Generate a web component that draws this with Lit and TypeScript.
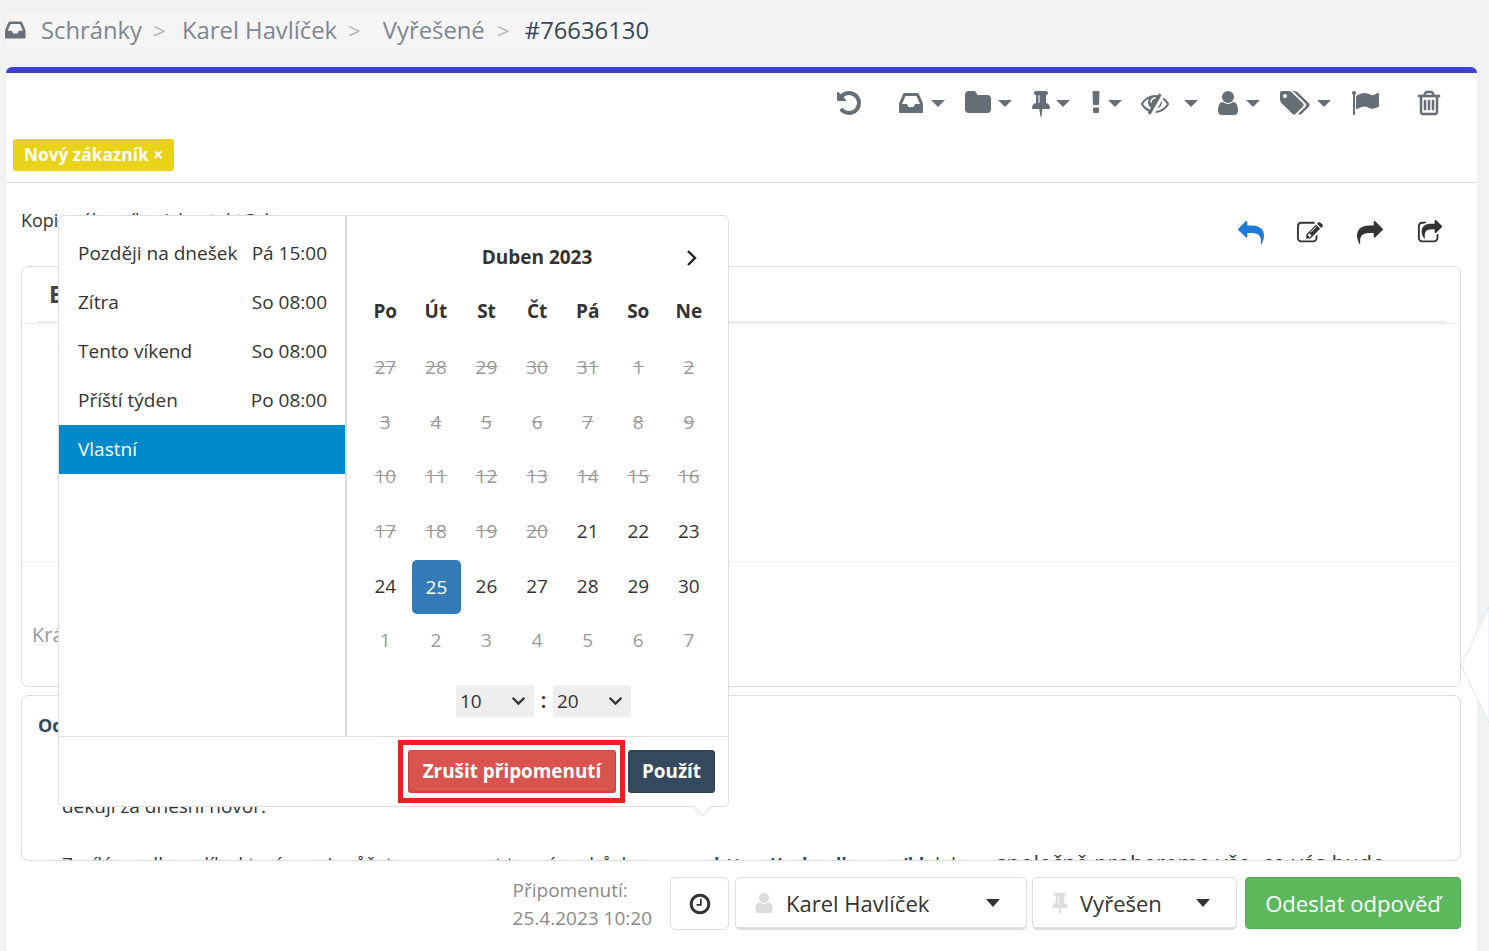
import { LitElement, html, css, svg } from "lit";
import { customElement } from "lit/decorators.js";

const P: Record<string, string> = {
  undo: "M1664 896q0 156-61 298t-164 245-245 164-298 61q-172 0-327-72.500t-264-204.500q-7-10-6.500-22.500t8.500-20.500l137-138q10-9 25-9 16 2 23 12 73 95 179 147t225 52q104 0 198.500-40.500t163.500-109.500 109.500-163.500 40.500-198.500-40.500-198.500-109.500-163.500-163.500-109.500-198.500-40.500q-98 0-188 35.500t-160 101.500l137 138q31 30 14 69-17 40-59 40h-448q-26 0-45-19t-19-45v-448q0-42 40-59 39-17 69 14l130 129q107-101 244.500-156.500t284.500-55.500q156 0 298 61t245 164 164 245 61 298z",
  clock: "M1024 544v448q0 14-9 23t-23 9h-320q-14 0-23-9t-9-23v-64q0-14 9-23t23-9h224v-352q0-14 9-23t23-9h64q14 0 23 9t9 23zm416 352q0-148-73-273t-198-198-273-73-273 73-198 198-73 273 73 273 198 198 273 73 273-73 198-198 73-273zm224 0q0 209-103 385.500t-279.500 279.500-385.500 103-385.500-103-279.500-279.500-103-385.500 103-385.500 279.500-279.500 385.500-103 385.500 103 279.500 279.500 103 385.500z",
  folder: "M1728 608v704q0 92-66 158t-158 66h-1216q-92 0-158-66t-66-158v-960q0-92 66-158t158-66h320q92 0 158 66t66 158v32h672q92 0 158 66t66 158z",
  user: "M1536 1399q0 109-62.500 187t-150.500 78h-854q-88 0-150.500-78t-62.500-187q0-85 8.500-160.500t31.500-152 58.500-131 94-89 134.500-34.500q131 128 313 128t313-128q76 0 134.500 34.500t94 89 58.500 131 31.500 152 8.500 160.500zm-256-887q0 159-112.500 271.500t-271.500 112.500-271.500-112.500-112.500-271.500 112.500-271.500 271.500-112.500 271.500 112.500 112.500 271.500z",
  pin: "M800 864v-448q0-14-9-23t-23-9-23 9-9 23v448q0 14 9 23t23 9 23-9 9-23zm672 352q0 26-19 45t-45 19h-429l-51 483q-2 12-10.500 20.500t-20.500 8.500h-1q-27 0-32-27l-76-485h-404q-26 0-45-19t-19-45q0-123 78.500-221.500t177.500-98.500v-512q-52 0-90-38t-38-90 38-90 90-38h640q52 0 90 38t38 90-38 90-90 38v512q99 0 177.500 98.500t78.500 221.500z",
  excl: "M1088 1248v224q0 26-19 45t-45 19h-256q-26 0-45-19t-19-45v-224q0-26 19-45t45-19h256q26 0 45 19t19 45zm30-1056l-28 768q-1 26-20.500 45t-45.500 19h-256q-26 0-45.500-19t-20.500-45l-28-768q-1-26 17.500-45t44.500-19h320q26 0 44.500 19t17.500 45z",
  tags: "M384 448q0-53-37.500-90.500t-90.500-37.500-90.500 37.500-37.500 90.500 37.500 90.500 90.500 37.500 90.500-37.500 37.500-90.500zm1067 576q0 53-37 90l-491 492q-39 37-91 37-53 0-90-37l-715-716q-38-37-64.500-101t-26.500-117v-416q0-52 38-90t90-38h416q53 0 117 26.500t102 64.500l715 714q37 39 37 91zm384 0q0 53-37 90l-491 492q-39 37-91 37-36 0-59-14t-53-45l470-470q37-37 37-90 0-52-37-91l-715-714q-38-38-102-64.500t-117-26.500h224q53 0 117 26.500t102 64.500l715 714q37 39 37 91z",
  flag: "M320 256q0 72-64 110v1266q0 13-9.500 22.500t-22.500 9.500h-64q-13 0-22.500-9.500t-9.500-22.500v-1266q-64-38-64-110 0-53 37.500-90.500t90.500-37.500 90.500 37.500 37.500 90.500zm1472 64v763q0 25-12.500 38.500t-39.500 27.500q-215 116-369 116-61 0-123.500-22t-108.500-48-115.500-48-142.500-22q-192 0-464 146-17 9-33 9-26 0-45-19t-19-45v-742q0-32 31-55 21-14 79-43 236-120 421-120 107 0 200 29t219 88q38 19 88 19 54 0 117.500-21t110-47 88-47 54.500-21q26 0 45 19t19 45z",
  trash: "M704 736v576q0 14-9 23t-23 9h-64q-14 0-23-9t-9-23v-576q0-14 9-23t23-9h64q14 0 23 9t9 23zm256 0v576q0 14-9 23t-23 9h-64q-14 0-23-9t-9-23v-576q0-14 9-23t23-9h64q14 0 23 9t9 23zm256 0v576q0 14-9 23t-23 9h-64q-14 0-23-9t-9-23v-576q0-14 9-23t23-9h64q14 0 23 9t9 23zm128 724v-948h-896v948q0 22 7 40.500t14.500 27 10.500 8.500h832q3 0 10.500-8.500t14.500-27 7-40.500zm-672-1076h448l-48-117q-7-9-17-11h-317q-10 2-17 11zm928 32v64q0 14-9 23t-23 9h-96v948q0 83-47 143.500t-113 60.500h-832q-66 0-113-58.500t-47-141.500v-952h-96q-14 0-23-9t-9-23v-64q0-14 9-23t23-9h309l70-167q15-37 54-63t79-26h320q40 0 79 26t54 63l70 167h309q14 0 23 9t9 23z",
  inbox: "M1023 960h316q-1-3-2.500-8.500t-2.500-7.500l-212-496h-708l-212 496q-1 3-2.500 8.500t-2.500 7.500h316l95 192h320zm513 30v482q0 26-19 45t-45 19h-1408q-26 0-45-19t-19-45v-482q0-62 25-123l238-552q10-25 36.500-42t52.500-17h832q26 0 52.500 17t36.500 42l238 552q25 61 25 123z",
  reply: "M1792 1120q0 166-127 451-3 7-10.500 24t-13.500 30-13 22q-12 17-28 17-15 0-23.500-10t-8.500-25q0-9 2.500-26.500t2.500-23.500q5-68 5-123 0-101-17.500-181t-48.500-138.500-80-101-105.500-69.500-133-42.500-154-21.500-175.500-6h-224v256q0 26-19 45t-45 19-45-19l-512-512q-19-19-19-45t19-45l512-512q19-19 45-19t45 19 19 45v256h224q713 0 875 403 53 134 53 333z",
  forward: "M1792 640q0 26-19 45l-512 512q-19 19-45 19t-45-19-19-45v-256h-224q-98 0-175.500 6t-154 21.500-133 42.500-105.500 69.500-80 101-48.500 138.500-17.500 181q0 55 5 123 0 6 2.500 23.500t2.500 26.500q0 15-8.500 25t-23.500 10q-16 0-28-17-7-9-13-22t-13.500-30-10.500-24q-127-285-127-451 0-199 53-333 162-403 875-403h224v-256q0-26 19-45t45-19 45 19l512 512q19 19 19 45z",
  share: "M1472 989v259q0 119-84.500 203.500t-203.500 84.500h-832q-119 0-203.500-84.500t-84.500-203.500v-832q0-119 84.500-203.500t203.500-84.500h255q13 0 22.500 9.500t9.500 22.500q0 27-26 32-77 26-133 60-10 4-16 4h-112q-66 0-113 47t-47 113v832q0 66 47 113t113 47h832q66 0 113-47t47-113v-214q0-19 18-29 28-13 54-37 16-16 35-8 21 9 21 29zm237-496l-384 384q-18 19-45 19-12 0-25-5-39-17-39-59v-192h-160q-323 0-438 131-119 137-74 473 3 23-20 34-8 2-12 2-16 0-26-13-10-14-21-31t-39.500-68.500-49.500-99.500-38.500-114-17.500-122q0-49 3.500-91t14-90 28-88 47-81.500 68.500-74 94.500-61.500 124.500-48.500 159.500-30.500 196.500-11h160v-192q0-42 39-59 13-5 25-5 26 0 45 19l384 384q19 19 19 45t-19 45z",
  edit: "M888 1184l116-116-152-152-116 116v56h96v96h56zm440-720q-16-16-33 1l-350 350q-17 17-1 33t33-1l350-350q17-17 1-33zm80 594v190q0 119-84.500 203.500t-203.500 84.500h-832q-119 0-203.500-84.500t-84.500-203.500v-832q0-119 84.500-203.500t203.500-84.500h832q63 0 117 25 15 7 18 23 3 17-9 29l-49 49q-14 14-32 8-23-6-45-6h-832q-66 0-113 47t-47 113v832q0 66 47 113t113 47h832q66 0 113-47t47-113v-126q0-13 9-22l64-64q15-15 35-7t20 29zm-96-738l288 288-672 672h-288v-288zm444 132l-92 92-288-288 92-92q28-28 68-28t68 28l152 152q28 28 28 68t-28 68z",
  eyeslash: "M555 1335l78-141q-87-63-136-159t-49-203q0-121 61-225-229 117-381 353 167 258 427 375zm389-759q0-20-14-34t-34-14q-125 0-214.500 89.500t-89.500 214.500q0 20 14 34t34 14 34-14 14-34q0-86 61-147t147-61q20 0 34-14t14-34zm363-191q0 7-1 9-106 189-316 567t-315 566l-49 89q-10 16-28 16-12 0-134-70-16-10-16-28 0-12 44-87-143-65-263.500-173t-208.500-245q-20-31-20-69t20-69q153-235 380-371t496-136q89 0 180 17l54-97q10-16 28-16 5 0 18 6t31 15.500 33 18.500 31.500 18.500 19.500 11.500q16 10 16 27zm37 447q0 139-79 253.500t-209 164.500l280-502q8 45 8 84zm448 128q0 35-20 69-39 64-109 145-150 172-347.500 267t-419.500 95l74-132q212-18 392.500-137t301.500-307q-115-179-282-294l63-112q95 64 182.500 153t144.500 184q20 34 20 69z",
};

const ic = (n: string, cls = "") =>
  html`<svg class="ic ${cls}" viewBox="0 0 1792 1792">${svg`<path d=${P[n]} fill="currentColor"></path>`}</svg>`;

const tools: [string, number | null, string][] = [
  ["undo", null, ""], ["inbox", 4, ""], ["folder", 6, ""], ["pin", 1, ""], ["excl", -2, ""],
  ["eyeslash", 15, ""], ["user", 4, ""], ["tags", 8, ""], ["flag", null, ""], ["trash", null, "heavy"],
];

const quick = [
  ["Později na dnešek", "Pá 15:00"],
  ["Zítra", "So 08:00"],
  ["Tento víkend", "So 08:00"],
  ["Příští týden", "Po 08:00"],
  ["Vlastní", ""],
];
const head = ["Po", "Út", "St", "Čt", "Pá", "So", "Ne"];
const days: [number, string][] = [
  ...[27, 28, 29, 30, 31, 1, 2, 3, 4, 5, 6, 7, 8, 9, 10, 11, 12, 13, 14, 15, 16, 17, 18, 19, 20].map(
    (d) => [d, "off"] as [number, string]
  ),
  [21, ""], [22, ""], [23, ""], [24, ""], [25, "sel"], [26, ""], [27, ""], [28, ""], [29, ""], [30, ""],
  ...[1, 2, 3, 4, 5, 6, 7].map((d) => [d, "next"] as [number, string]),
];

@customElement("app-root")
export class AppRoot extends LitElement {
  static styles = css`
    :host {
      display: block;
      position: relative;
      height: 951px;
      overflow: hidden;
      background: #f1f2f4;
      font-family: "Open Sans", "Noto Sans", sans-serif;
      color: #333;
    }
    .ic { display: block; width: 28px; height: 28px; overflow: visible; flex: none; }
    .heavy path { stroke: currentColor; stroke-width: 36; }
    .crumbs {
      height: 67px;
      display: flex;
      align-items: flex-start;
    }
    .crumbs-in {
      margin: 13px 0 0 5px;
      height: 34px;
      width: 644px;
      background: #f5f5f5;
      display: flex;
      align-items: center;
      font-size: 23.8px;
      color: #7d8791;
      white-space: nowrap;
    }
    .crumbs-in .ic { width: 24px; height: 24px; color: #6b7178; margin-right: 12px; }
    .sep { color: #b5b5b5; font-size: 22px; width: 41px; padding-left: 11px; box-sizing: border-box; }
    .sep.w { width: 47px; }
    .sep.n { width: 41px; padding-left: 12px; }
    .cur { color: #33465a; }
    .main {
      margin: 0 12px 0 6px;
      height: 884px;
      background: #fff;
      border-top: 6px solid #3c40cf;
      border-radius: 6px 6px 0 0;
      box-sizing: border-box;
      display: flow-root;
    }
    .tools {
      display: grid;
      grid-template-columns: 64px 65px 63px 55px 59px 73px 67px 70px 64px 28px;
      padding: 16px 0 0 829px;
      color: #666d75;
    }
    .tool { display: flex; align-items: center; }
    .caret {
      flex: none;
      width: 0;
      height: 0;
      border-left: 7.5px solid transparent;
      border-right: 7.5px solid transparent;
      border-top: 7px solid #666d75;
      margin-top: 1px;
    }
    .tag {
      margin: 22px 0 0 7px;
      width: 161px;
      height: 32px;
      box-sizing: border-box;
      background: #e9d318;
      border-radius: 3px;
      color: #fff;
      font-weight: 700;
      font-size: 17.3px;
      line-height: 32px;
      text-align: center;
      white-space: nowrap;
    }
    .hr { height: 1px; background: #ddd; margin-top: 11px; }
    .meta {
      height: 83px;
      box-sizing: border-box;
      display: flex;
      justify-content: space-between;
      padding: 25px 34px 0 15px;
      font-size: 18px;
      line-height: 24px;
    }
    .meta-icons { display: flex; gap: 34px; padding-top: 12px; color: #333; }
    .meta-icons .ic { width: 26px; height: 26px; }
    .meta-icons .blue { color: #1e7ad8; width: 28px; margin-right: -2px; }
    .card {
      margin-left: 15px;
      width: 1440px;
      box-sizing: border-box;
      border: 1.5px solid #ddd;
      border-radius: 7px;
      background: #fff;
      overflow: hidden;
    }
    .c1 { height: 421px; padding: 13px 14px 0 15px; }
    .c1 h3 {
      margin: 0 0 0 12px;
      height: 41px;
      font-size: 23px;
      line-height: 28px;
      font-weight: 700;
      color: #444;
    }
    .c1 .rule { height: 2px; background: #eee; }
    .c1 .body { height: 237px; border-top: 1px solid #eee; margin: 0 -14px 0 -15px; border-bottom: 1px dotted #e8e8e8; }
    .c1 .ph { margin: 61px 0 0 -5px; font-size: 20px; line-height: 24px; color: #999; }
    .c2 { height: 166px; margin-top: 8px; padding: 15px 0 0 16px; }
    .c2 h4 { margin: 0; font-size: 18px; line-height: 28px; font-weight: 700; color: #34495e; }
    .c2 p { margin: 0 0 0 24px; font-size: 19px; line-height: 24px; color: #333; white-space: nowrap; }
    .c2 .p1 { margin-top: 55px; }
    .c2 .p2 { margin-top: 33px; display: flex; align-items: baseline; }
    .c2 .a { width: 652px; flex: none; }
    .c2 .l { width: 282px; flex: none; font-size: 18px; }
    .c2 .r { font-size: 22.2px; }
    .c2 b { color: #1f4e79; }
    .bar {
      margin-top: 16px;
      height: 53px;
      padding-right: 16px;
      display: flex;
      justify-content: flex-end;
      align-items: stretch;
    }
    .rem {
      margin-right: 18px;
      font-size: 19px;
      line-height: 28px;
      color: #8a8a8a;
      white-space: nowrap;
      margin-top: -1px;
    }
    .btn-clock {
      width: 59px;
      box-sizing: border-box;
      border: 1.5px solid #ddd;
      border-radius: 5px;
      display: flex;
      align-items: center;
      justify-content: center;
      margin-right: 6px;
      color: #333;
    }
    .btn-clock .ic { width: 24px; height: 24px; }
    .sel {
      box-sizing: border-box;
      border: 1.5px solid #ddd;
      border-bottom-width: 3px;
      border-radius: 5px;
      display: flex;
      align-items: center;
      font-size: 22px;
      color: #333;
      white-space: nowrap;
    }
    .sel .ic { color: #ddd; width: 24px; height: 24px; }
    .sel .tri {
      margin-left: auto;
      width: 0;
      height: 0;
      border-left: 7.5px solid transparent;
      border-right: 7.5px solid transparent;
      border-top: 8px solid #333;
    }
    .s1 { width: 292px; margin-right: 5px; padding: 0 26px 0 16px; gap: 10px; }
    .s2 { width: 205px; margin-right: 8px; padding: 0 26px 0 15px; gap: 8px; }
    .send {
      width: 216px;
      height: 52px;
      background: #5cb85c;
      border: 1px solid #4cae4c;
      box-sizing: border-box;
      border-radius: 4px;
      color: #fff;
      font-size: 22.1px;
      line-height: 50px;
      text-align: center;
      white-space: nowrap;
    }
    .pop {
      position: absolute;
      left: 58px;
      top: 215px;
      width: 671px;
      height: 592px;
      box-sizing: border-box;
      background: #fff;
      border: 1.5px solid #ddd;
      border-radius: 6px;
      display: flex;
      flex-direction: column;
    }
    .pop-top { display: flex; height: 520px; border-bottom: 1.5px solid #ddd; }
    .quick {
      width: 288px;
      flex: none;
      box-sizing: border-box;
      border-right: 2px solid #ddd;
      padding-top: 13px;
      font-size: 19px;
    }
    .q {
      height: 49px;
      display: flex;
      align-items: center;
      justify-content: space-between;
      padding: 0 18px 2px 19px;
      box-sizing: border-box;
      white-space: nowrap;
      color: #333;
    }
    .q.on { background: #0089cb; color: #fff; }
    .calw { flex: 1; min-width: 0; padding: 0 14px 0 13px; }
    .cal-title {
      height: 83px;
      position: relative;
      text-align: center;
      font-weight: 700;
      font-size: 19px;
      line-height: 82px;
      color: #333;
    }
    .chev { position: absolute; right: 16px; top: 33px; width: 12px; height: 18px; }
    .grid {
      display: grid;
      grid-template-columns: repeat(7, 50.6px);
      grid-template-rows: 57.4px;
      grid-auto-rows: 54.6px;
      margin-top: -16.4px;
    }
    .wk, .d {
      display: flex;
      align-items: center;
      justify-content: center;
      font-size: 19px;
      color: #333;
    }
    .wk { font-weight: 700; }
    .d.off { color: #9a9a9a; text-decoration: line-through; }
    .d.next { color: #9a9a9a; }
    .d.sel2 { background: #337ab7; color: #fff; border-radius: 5px; margin: 2px 0 -1px 1px; }
    .time {
      display: flex;
      justify-content: center;
      align-items: center;
      margin-top: 17px;
      font-size: 19px;
      padding-left: 13px;
    }
    .colon { width: 19px; text-align: center; font-size: 22px; font-weight: 600; margin-top: -3px; line-height: 32px; }
    .tsel {
      width: 78px;
      height: 32px;
      box-sizing: border-box;
      background: #eee;
      padding: 0 8px 0 4px;
      display: flex;
      align-items: center;
      justify-content: space-between;
      line-height: 32px;
    }
    .tsel svg { width: 15px; height: 10px; }
    .pop-foot {
      flex: 1;
      display: flex;
      justify-content: flex-end;
      align-items: center;
      gap: 3px;
      padding: 0 13px 0 0;
    }
    .mark {
      border: 5px solid #ee1c25;
      padding: 5px 4px 5px 5px;
      display: flex;
    }
    .b {
      height: 43px;
      box-sizing: border-box;
      border-radius: 3px;
      color: #fff;
      font-weight: 700;
      font-size: 18.9px;
      line-height: 40px;
      text-align: center;
      white-space: nowrap;
    }
    .red { width: 208px; background: #d9534f; border: 1px solid #c9443f; border-bottom-width: 2px; }
    .navy { width: 87px; background: #34495e; border: 1px solid #2c3e50; }
    .arrow {
      position: absolute;
      left: 636px;
      top: 582px;
      width: 14px;
      height: 14px;
      background: #fff;
      border-right: 1.5px solid #ddd;
      border-bottom: 1.5px solid #ddd;
      transform: rotate(45deg);
    }
    .chevron-bg { position: absolute; right: 0; top: 600px; width: 28px; height: 130px; }
  `;

  render() {
    return html`
      <div class="crumbs">
        <div class="crumbs-in">
          ${ic("inbox")}<span>Schránky</span><span class="sep">&gt;</span><span>Karel Havlíček</span
          ><span class="sep w">&gt;</span><span>Vyřešené</span><span class="sep n">&gt;</span
          ><span class="cur">#76636130</span>
        </div>
      </div>
      <div class="main">
        <div class="tools">
          ${tools.map(
            ([n, gap, cls]) => html`<div class="tool">
              ${ic(n, cls)}${gap === null ? "" : html`<span class="caret" style="margin-left:${gap}px"></span>`}
            </div>`
          )}
        </div>
        <div class="tag">Nový zákazník ×</div>
        <div class="hr"></div>
        <div class="meta">
          <div>Kopie zákazníkovi: kontakt@domena.cz</div>
          <div class="meta-icons">${ic("reply", "blue")}${ic("edit")}${ic("forward")}${ic("share")}</div>
        </div>
        <div class="card c1">
          <h3>E-mail</h3>
          <div class="rule"></div>
          <div class="body"></div>
          <div class="ph">Krátká poznámka</div>
        </div>
        <div class="card c2">
          <h4>Odpověď</h4>
          <p class="p1">děkuji za dnešní hovor.</p>
          <p class="p2">
            <span class="a">Zasílám odkaz, díky kterému si můžete rezervovat termín schůzky v</span
            ><span class="l"><b>https://calendly.com/kh</b> kde</span
            ><span class="r">společně probereme vše, co vás bude</span>
          </p>
        </div>
        <div class="bar">
          <div class="rem">Připomenutí:<br />25.4.2023 10:20</div>
          <div class="btn-clock">${ic("clock")}</div>
          <div class="sel s1">${ic("user")}<span>Karel Havlíček</span><span class="tri"></span></div>
          <div class="sel s2">${ic("pin")}<span>Vyřešen</span><span class="tri"></span></div>
          <div class="send">Odeslat odpověď</div>
        </div>
      </div>

      <svg class="chevron-bg" viewBox="0 0 28 130">
        <polygon points="28,7 0,65 28,123" fill="#fff" stroke="#dbe6f5" stroke-width="1"></polygon>
      </svg>

      <div class="pop">
        <div class="pop-top">
          <div class="quick">
            ${quick.map(
              ([a, b], i) =>
                html`<div class="q ${i === 4 ? "on" : ""}"><span>${a}</span><span>${b}</span></div>`
            )}
          </div>
          <div class="calw">
            <div class="cal-title">
              Duben 2023
              <svg class="chev" viewBox="0 0 12 18">
                <path d="M2 2l7 7-7 7" fill="none" stroke="#222" stroke-width="2.4"></path>
              </svg>
            </div>
            <div class="grid">
              ${head.map((h) => html`<div class="wk">${h}</div>`)}
              ${days.map(([d, c]) => html`<div class="d ${c === "sel" ? "sel2" : c}">${d}</div>`)}
            </div>
            <div class="time">
              <div class="tsel">
                <span>10</span>
                <svg viewBox="0 0 14 9"><path d="M1.500 1.500l5.500 5.500 5.500-5.500" fill="none" stroke="#333" stroke-width="2.200"></path></svg>
              </div>
              <div class="colon">:</div>
              <div class="tsel">
                <span>20</span>
                <svg viewBox="0 0 14 9"><path d="M1.500 1.500l5.500 5.500 5.500-5.500" fill="none" stroke="#333" stroke-width="2.200"></path></svg>
              </div>
            </div>
          </div>
        </div>
        <div class="pop-foot">
          <div class="mark"><div class="b red">Zrušit připomenutí</div></div>
          <div class="b navy">Použít</div>
        </div>
        <div class="arrow"></div>
      </div>
    `;
  }
}
